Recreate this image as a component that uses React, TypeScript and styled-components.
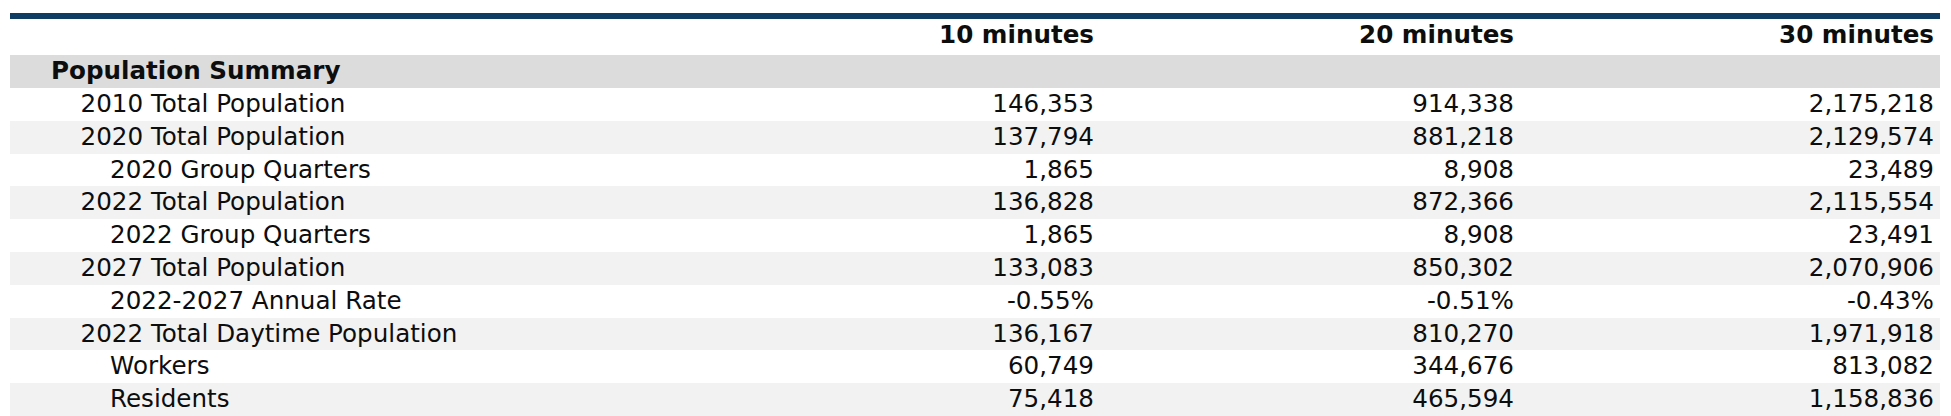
import * as React from 'react'
import styled, { createGlobalStyle } from 'styled-components'

const GlobalStyle = createGlobalStyle`
  body {
    margin: 0;
    background: #ffffff;
    font-family: "DejaVu Sans", Verdana, sans-serif;
    color: #0d0d0d;
  }
`

const Page = styled.div`
  padding: 13px 11px 0 10px;
`

const TopRule = styled.div`
  height: 6px;
  background-color: #103b63;
`

const Row = styled.div<{ $tone: 'white' | 'light' | 'section'; $head?: boolean }>`
  display: grid;
  grid-template-columns: 1fr 420px 420px 420px;
  height: 32.8px;
  padding-bottom: ${(p) => (p.$head ? '3.5px' : '0')};
  align-items: center;
  font-size: 24.6px;
  line-height: 32.8px;
  background-color: ${(p) =>
    p.$tone === 'section' ? '#dcdcdc' : p.$tone === 'light' ? '#f2f2f2' : '#ffffff'};
`

const Label = styled.div<{ $level: number }>`
  padding-left: ${(p) => 41 + p.$level * 29.5}px;
  font-weight: ${(p) => (p.$level === 0 ? 700 : 400)};
  white-space: nowrap;
`

const Value = styled.div<{ $bold?: boolean }>`
  text-align: right;
  padding-right: 6px;
  font-weight: ${(p) => (p.$bold ? 700 : 400)};
  white-space: nowrap;
`

type Line = { label: string; level: number; values: string[] }

const lines: Line[] = [
  { label: '2010 Total Population', level: 1, values: ['146,353', '914,338', '2,175,218'] },
  { label: '2020 Total Population', level: 1, values: ['137,794', '881,218', '2,129,574'] },
  { label: '2020 Group Quarters', level: 2, values: ['1,865', '8,908', '23,489'] },
  { label: '2022 Total Population', level: 1, values: ['136,828', '872,366', '2,115,554'] },
  { label: '2022 Group Quarters', level: 2, values: ['1,865', '8,908', '23,491'] },
  { label: '2027 Total Population', level: 1, values: ['133,083', '850,302', '2,070,906'] },
  { label: '2022-2027 Annual Rate', level: 2, values: ['-0.55%', '-0.51%', '-0.43%'] },
  { label: '2022 Total Daytime Population', level: 1, values: ['136,167', '810,270', '1,971,918'] },
  { label: 'Workers', level: 2, values: ['60,749', '344,676', '813,082'] },
  { label: 'Residents', level: 2, values: ['75,418', '465,594', '1,158,836'] },
]

export default function App() {
  return (
    <Page>
      <GlobalStyle />
      <TopRule />
      <Row $tone="white" $head>
        <div />
        <Value $bold>10 minutes</Value>
        <Value $bold>20 minutes</Value>
        <Value $bold>30 minutes</Value>
      </Row>
      <Row $tone="section">
        <Label $level={0}>Population Summary</Label>
        <div />
        <div />
        <div />
      </Row>
      {lines.map((line, i) => (
        <Row key={line.label} $tone={i % 2 === 1 ? 'light' : 'white'}>
          <Label $level={line.level}>{line.label}</Label>
          {line.values.map((v, j) => (
            <Value key={j}>{v}</Value>
          ))}
        </Row>
      ))}
    </Page>
  )
}
